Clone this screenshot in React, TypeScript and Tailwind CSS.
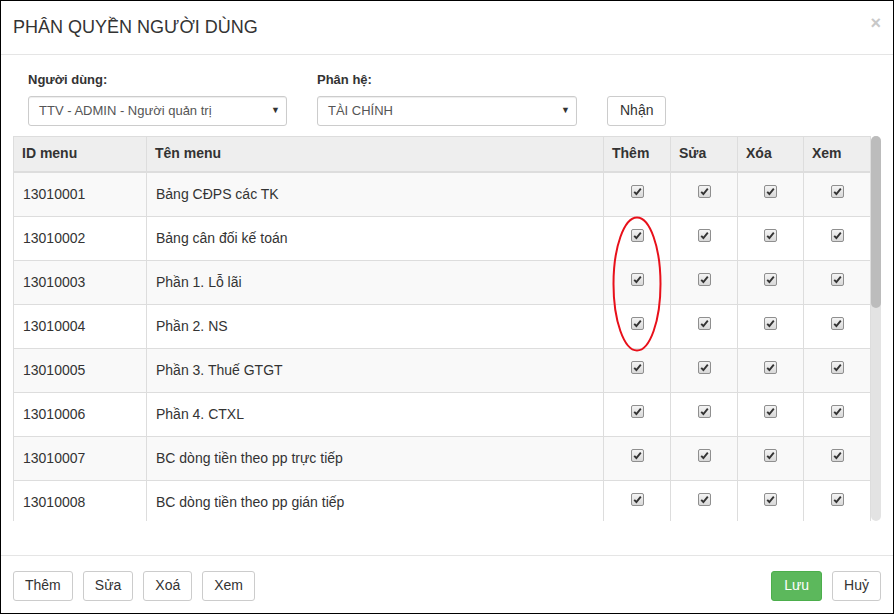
import React from "react";

const rows = [
  ["13010001", "Bảng CĐPS các TK"],
  ["13010002", "Bảng cân đối kế toán"],
  ["13010003", "Phần 1. Lỗ lãi"],
  ["13010004", "Phần 2. NS"],
  ["13010005", "Phần 3. Thuế GTGT"],
  ["13010006", "Phần 4. CTXL"],
  ["13010007", "BC dòng tiền theo pp trực tiếp"],
  ["13010008", "BC dòng tiền theo pp gián tiếp"],
];

function Check() {
  return (
    <span className="inline-flex h-[13px] w-[13px] items-center justify-center rounded-[2px] border border-[#8f8f8f] bg-gradient-to-b from-[#f4f4f4] to-[#d8d8d8]">
      <svg width="9" height="9" viewBox="0 0 9 9">
        <path d="M1.2 4.8 L3.4 7 L7.8 1.6" fill="none" stroke="#333" strokeWidth="1.9" />
      </svg>
    </span>
  );
}

function Select({ value, w }: { value: string; w: string }) {
  return (
    <div className={`flex h-[30px] ${w} items-center justify-between rounded-[3px] border border-[#ccc] bg-white pl-[10px] pr-[6px] text-[13px] text-[#555] shadow-[inset_0_1px_1px_rgba(0,0,0,0.075)]`}>
      <span>{value}</span>
      <span className="text-[9px] text-[#333]">▼</span>
    </div>
  );
}

function Btn({ children }: { children: React.ReactNode }) {
  return (
    <button className="h-[30px] rounded-[3px] border border-[#ccc] bg-white px-[11px] text-[14px] text-[#333]">
      {children}
    </button>
  );
}

export default function App() {
  return (
    <div
      className="relative flex h-[614px] w-[894px] flex-col border border-black bg-white text-[#333]"
      style={{ fontFamily: '"Liberation Sans", Arial, sans-serif' }}
    >
      {/* Header */}
      <div className="flex h-[54px] items-center justify-between border-b border-[#e5e5e5] pl-[12px] pr-[12px]">
        <h1 className="text-[18px] font-normal text-[#333]">PHÂN QUYỀN NGƯỜI DÙNG</h1>
        <span className="mb-[8px] text-[18px] font-bold text-[#c8c8c8]">×</span>
      </div>

      {/* Body */}
      <div className="flex flex-1 flex-col px-[12px] pt-[15px]">
        <div className="flex items-end gap-[30px] px-[15px]">
          <div className="flex flex-col gap-[6px]">
            <label className="text-[13px] font-bold">Người dùng:</label>
            <Select value="TTV - ADMIN - Người quản trị" w="w-[259px]" />
          </div>
          <div className="flex flex-col gap-[6px]">
            <label className="text-[13px] font-bold">Phân hệ:</label>
            <Select value="TÀI CHÍNH" w="w-[260px]" />
          </div>
          <button className="h-[30px] rounded-[3px] border border-[#ccc] bg-white px-[12px] text-[14px] text-[#333]">
            Nhận
          </button>
        </div>

        <div className="mt-[10px] flex h-[385px] overflow-hidden">
          <table className="w-[857px] table-fixed border-collapse text-[14px]">
            <colgroup>
              <col className="w-[133px]" />
              <col className="w-[457px]" />
              <col className="w-[67px]" />
              <col className="w-[67px]" />
              <col className="w-[66px]" />
              <col className="w-[67px]" />
            </colgroup>
            <thead>
              <tr className="h-[36px] bg-[#eee]">
                <th className="border border-[#ddd] border-b-2 px-[8px] text-left font-bold">ID menu</th>
                <th className="border border-[#ddd] border-b-2 px-[8px] text-left font-bold">Tên menu</th>
                <th className="border border-[#ddd] border-b-2 px-[8px] text-left font-bold">Thêm</th>
                <th className="border border-[#ddd] border-b-2 px-[8px] text-left font-bold">Sửa</th>
                <th className="border border-[#ddd] border-b-2 px-[8px] text-left font-bold">Xóa</th>
                <th className="border border-[#ddd] border-b-2 px-[8px] text-left font-bold">Xem</th>
              </tr>
            </thead>
            <tbody>
              {rows.map(([id, name], i) => (
                <tr key={id} className={`h-[44px] ${i % 2 === 0 ? "bg-[#f9f9f9]" : "bg-white"}`}>
                  <td className="border border-[#ddd] px-[9px]">{id}</td>
                  <td className="border border-[#ddd] px-[9px]">{name}</td>
                  {[0, 1, 2, 3].map((c) => (
                    <td key={c} className="border border-[#ddd] pb-[6px] text-center align-middle">
                      <Check />
                    </td>
                  ))}
                </tr>
              ))}
            </tbody>
          </table>
          {/* scrollbar */}
          <div className="flex w-[11px] flex-col rounded-[5px] bg-[#e3e3e3]">
            <div className="h-[172px] rounded-[5px] bg-[#bcbcbc]" />
          </div>
        </div>
      </div>

      {/* Footer */}
      <div className="flex h-[58px] items-center justify-between border-t border-[#e5e5e5] px-[12px] pt-[2px]">
        <div className="flex gap-[10px]">
          <Btn>Thêm</Btn>
          <Btn>Sửa</Btn>
          <Btn>Xoá</Btn>
          <Btn>Xem</Btn>
        </div>
        <div className="flex gap-[10px]">
          <button className="h-[30px] rounded-[3px] border border-[#4cae4c] bg-[#5cb85c] px-[12px] text-[14px] text-white">
            Lưu
          </button>
          <Btn>Huỷ</Btn>
        </div>
      </div>

      {/* annotation */}
      <svg className="pointer-events-none absolute left-[610px] top-[214px]" width="52" height="138">
        <ellipse cx="26" cy="69" rx="23.5" ry="66.5" fill="none" stroke="#e8101a" strokeWidth="2" />
      </svg>
    </div>
  );
}
